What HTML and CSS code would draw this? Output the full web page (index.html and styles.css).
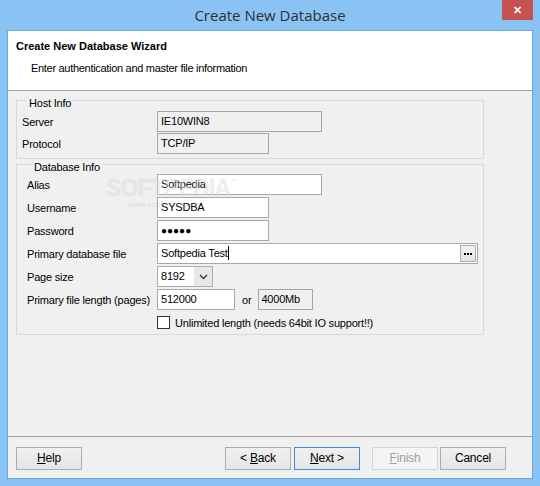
FILE: index.html
```html
<!DOCTYPE html>
<html>
<head>
    <meta charset="utf-8">
    <link rel="stylesheet" href="styles.css">
</head>
<body>
    <div class="window">
        <div class="titlebar">
            <div></div>
            <div class="title">Create New Database</div>
            <div class="close">&#x2715;</div>
        </div>

        <div class="client">
            <div class="header">
                <div class="header-title">Create New Database Wizard</div>
                <div class="header-sub">Enter authentication and master file information</div>
            </div>

            <div class="content">
                <div class="group group-host">
                    <div class="group-title">Host Info</div>
                    <div class="row">
                        <div class="label">Server</div>
                        <div class="field disabled w-wide">IE10WIN8</div>
                    </div>
                    <div class="row">
                        <div class="label">Protocol</div>
                        <div class="field disabled w-mid">TCP/IP</div>
                    </div>
                </div>

                <div class="group group-db">
                    <div class="group-title">Database Info</div>
                    <div class="row">
                        <div class="label">Alias</div>
                        <div class="field w-wide">Softpedia</div>
                    </div>
                    <div class="row">
                        <div class="label">Username</div>
                        <div class="field w-mid">SYSDBA</div>
                    </div>
                    <div class="row">
                        <div class="label">Password</div>
                        <div class="field w-mid"><span class="dots">●●●●●</span></div>
                    </div>
                    <div class="row">
                        <div class="label">Primary database file</div>
                        <div class="field w-full file-field">
                            <span>Softpedia Test<span class="caret"></span></span>
                            <div class="browse">
                                <span class="dot"></span><span class="dot"></span><span class="dot"></span>
                            </div>
                        </div>
                    </div>
                    <div class="row">
                        <div class="label">Page size</div>
                        <div class="select">
                            <span class="select-value">8192</span>
                            <span class="select-arrow">
                                <svg width="9" height="6" viewBox="0 0 9 6"><path d="M1 1 L4.5 4.5 L8 1" fill="none" stroke="#333" stroke-width="1.4"/></svg>
                            </span>
                        </div>
                    </div>
                    <div class="row">
                        <div class="label">Primary file length (pages)</div>
                        <div class="inline">
                            <div class="field w-len">512000</div>
                            <span class="or">or</span>
                            <div class="field disabled w-mb">4000Mb</div>
                        </div>
                    </div>
                    <div class="row">
                        <div class="label"></div>
                        <div class="check-row">
                            <span class="checkbox"></span>
                            <span>Unlimited length (needs 64bit IO support!!)</span>
                        </div>
                    </div>
                    <div class="watermark">SOFTPEDIA<sup>™</sup><div class="watermark-url">www.softpedia.com</div></div>
                </div>
            </div>

            <div class="footer">
                <div class="button"><u>H</u>elp</div>
                <div class="spacer"></div>
                <div class="button">&lt; <u>B</u>ack</div>
                <div class="button focused"><u>N</u>ext &gt;</div>
                <div class="button disabled finish"><u>F</u>inish</div>
                <div class="button cancel">Cancel</div>
            </div>
        </div>
    </div>
</body>
</html>
```

FILE: styles.css
```css
body {
    margin: 0;
    font-family: 'Liberation Sans', Arial, sans-serif;
    font-size: 11px;
    letter-spacing: -0.2px;
    color: #000;
}

.window {
    width: 540px;
    height: 486px;
    background: #88c3f4;
    display: flex;
    flex-direction: column;
    box-sizing: border-box;
}

.titlebar {
    height: 30px;
    display: grid;
    grid-template-columns: 1fr auto 1fr;
    align-items: start;
}

.title {
    font-family: 'Open Sans', 'Noto Sans', sans-serif;
    font-size: 15px;
    letter-spacing: 0;
    color: #2f2f2f;
    line-height: 30px;
}

.close {
    justify-self: end;
    width: 31px;
    height: 20px;
    margin-right: 7px;
    background: #c75050;
    color: #fff;
    font-size: 11px;
    font-weight: bold;
    letter-spacing: 0;
    text-align: center;
    line-height: 20px;
}

.client {
    flex: 1;
    margin: 0 7px 7px 7px;
    border: 1px solid #6fa6da;
    display: flex;
    flex-direction: column;
    background: #f0f0f0;
}

.header {
    height: 60px;
    background: #fff;
    border-bottom: 1px solid #a0a0a0;
    box-sizing: border-box;
    padding: 9px 0 0 8px;
}

.header-title {
    font-weight: bold;
    letter-spacing: 0;
    line-height: 13px;
}

.header-sub {
    margin: 9px 0 0 15px;
    letter-spacing: -0.3px;
    line-height: 13px;
}

.content {
    flex: 1;
    padding: 9px 0 0 8px;
}

.group {
    position: relative;
    width: 468px;
    border: 1px solid #d9d9d9;
    box-sizing: border-box;
}

.group-title {
    width: fit-content;
    margin: -7px 0 0 5px;
    padding: 0 2px;
    line-height: 13px;
    background: #f0f0f0;
}

.group-host {
    padding: 3px 0 4px 5px;
}

.group-db {
    margin-top: 5px;
    padding: 3px 0 1px 10px;
}

.row {
    display: grid;
    align-items: center;
    height: 21px;
    margin-top: 1px;
}

.group-host .row {
    grid-template-columns: 135px auto;
}

.group-db .row {
    grid-template-columns: 130px auto;
    margin-top: 2px;
}

.group-db .group-title + .row {
    margin-top: 0;
}

.field {
    height: 21px;
    box-sizing: border-box;
    border: 1px solid #a9a9a9;
    background: #fff;
    padding: 0 3px;
    line-height: 19px;
    white-space: nowrap;
}

.field.disabled {
    background: #f0f0f0;
    border-color: #a6a6a6;
}

.w-wide { width: 165px; }
.w-mid { width: 112px; }
.w-full { width: 321px; }
.w-len { width: 78px; }
.w-mb { width: 55px; padding-left: 2px; }

.dots {
    font-size: 10px;
    letter-spacing: 0;
}

.file-field {
    display: flex;
    justify-content: space-between;
    align-items: center;
    padding-right: 1px;
}

.caret {
    display: inline-block;
    width: 1px;
    height: 14px;
    background: #000;
    vertical-align: -3px;
}

.browse {
    width: 16px;
    height: 17px;
    box-sizing: border-box;
    border: 1px solid #adadad;
    background: linear-gradient(#f2f2f2, #e3e3e3);
    display: flex;
    align-items: center;
    justify-content: center;
    gap: 1px;
}

.dot {
    width: 2px;
    height: 2px;
    background: #000;
}

.select {
    width: 56px;
    height: 21px;
    box-sizing: border-box;
    border: 1px solid #acacac;
    display: flex;
}

.select-value {
    flex: 1;
    background: #fff;
    padding-left: 3px;
    line-height: 19px;
}

.select-arrow {
    width: 18px;
    background: #e8e8e8;
    display: flex;
    align-items: center;
    justify-content: center;
}

.inline {
    display: flex;
    align-items: center;
}

.or {
    margin: 0 7px 0 7px;
}

.check-row {
    display: flex;
    align-items: center;
    gap: 5px;
}

.checkbox {
    width: 13px;
    height: 13px;
    box-sizing: border-box;
    border: 1px solid #333;
    background: #fff;
}

.watermark {
    position: absolute;
    left: 89px;
    top: 5px;
    font-family: 'Liberation Sans', sans-serif;
    font-size: 23px;
    font-weight: bold;
    letter-spacing: -0.8px;
    line-height: 24px;
    color: rgba(255, 255, 255, 0.3);
    text-shadow: 0 0 1px rgba(170, 170, 170, 0.3);
    pointer-events: none;
}

.watermark sup {
    font-size: 7px;
    vertical-align: 12px;
}

.watermark-url {
    font-size: 8px;
    font-weight: normal;
    letter-spacing: 0;
    line-height: 9px;
    margin: 0 0 0 22px;
    color: rgba(150, 150, 150, 0.25);
    text-shadow: none;
}

.footer {
    height: 42px;
    border-top: 1px solid #a0a0a0;
    box-sizing: border-box;
    display: flex;
    align-items: flex-start;
    padding: 10px 26px 0 8px;
}

.spacer {
    flex: 1;
}

.button {
    width: 66px;
    height: 23px;
    box-sizing: border-box;
    border: 1px solid #acacac;
    background: linear-gradient(#f0f0f0, #e5e5e5);
    text-align: center;
    line-height: 21px;
    font-size: 12px;
    letter-spacing: -0.2px;
}

.button.focused {
    margin-left: 3px;
    border-color: #3c8ddf;
}

.button.finish {
    margin-left: 12px;
}

.button.cancel {
    margin-left: 2px;
}

.button.disabled {
    color: #a0a0a0;
    border-color: #d5d5d5;
    background: #f4f4f4;
}
```
